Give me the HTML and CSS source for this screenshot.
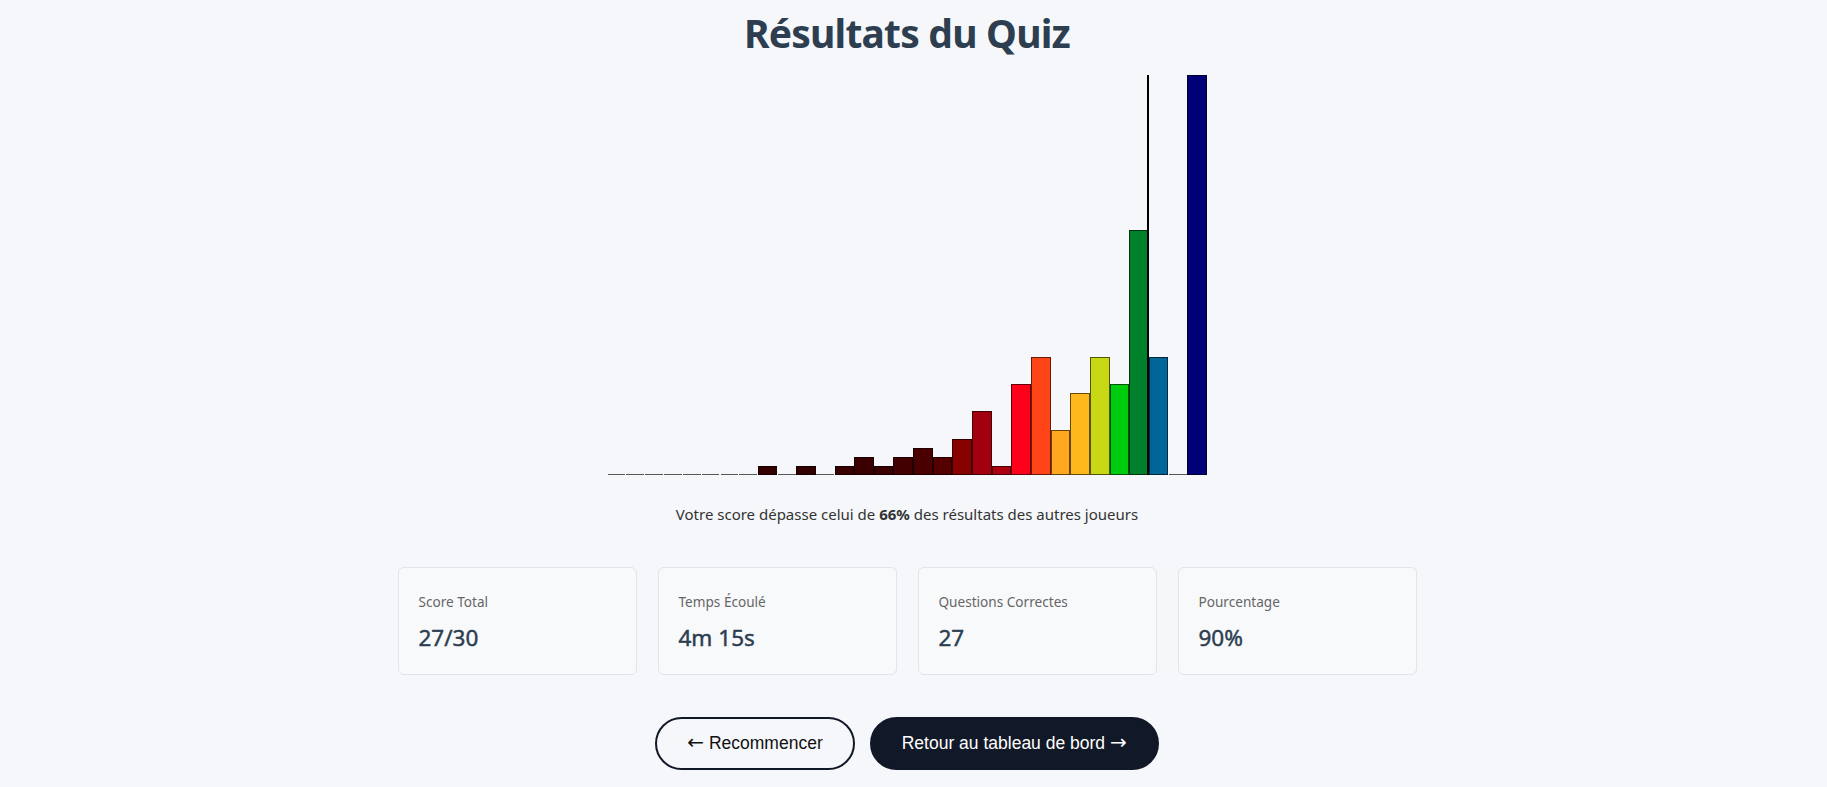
FILE: index.html
```html
<!DOCTYPE html>
<html lang="fr">
<head>
<meta charset="utf-8">
<title>Résultats du Quiz</title>
<link rel="stylesheet" href="styles.css">
</head>
<body>
<main class="page">
  <h1 class="title">Résultats du Quiz</h1>

  <div class="chart">
    <div class="bin zero"></div>
    <div class="bin zero"></div>
    <div class="bin zero"></div>
    <div class="bin zero"></div>
    <div class="bin zero"></div>
    <div class="bin zero"></div>
    <div class="bin zero"></div>
    <div class="bin zero"></div>
    <div class="bin bar" style="height:9px;background:#330000"></div>
    <div class="bin zero"></div>
    <div class="bin bar" style="height:9px;background:#330000"></div>
    <div class="bin zero"></div>
    <div class="bin bar" style="height:9px;background:#380000"></div>
    <div class="bin bar" style="height:18px;background:#3a0000"></div>
    <div class="bin bar" style="height:9px;background:#3d0000"></div>
    <div class="bin bar" style="height:18px;background:#420000"></div>
    <div class="bin bar" style="height:27px;background:#4a0000"></div>
    <div class="bin bar" style="height:18px;background:#550000"></div>
    <div class="bin bar" style="height:36px;background:#880000"></div>
    <div class="bin bar" style="height:64px;background:#a3000f"></div>
    <div class="bin bar" style="height:9px;background:#aa0010"></div>
    <div class="bin bar" style="height:91px;background:#ff001a"></div>
    <div class="bin bar" style="height:118px;background:#ff4418"></div>
    <div class="bin bar" style="height:45px;background:#ffa81f"></div>
    <div class="bin bar" style="height:82px;background:#ffb81c"></div>
    <div class="bin bar" style="height:118px;background:#c8d814"></div>
    <div class="bin bar" style="height:91px;background:#00cc0e"></div>
    <div class="bin bar" style="height:245px;background:#00802a"></div>
    <div class="bin bar" style="height:118px;background:#006699"></div>
    <div class="bin zero"></div>
    <div class="bin bar" style="height:400px;background:#000077"></div>
    <div class="marker" style="left:540px"></div>
  </div>

  <p class="summary">Votre score dépasse celui de <strong>66%</strong> des résultats des autres joueurs</p>

  <section class="stats">
    <div class="card">
      <div class="label">Score Total</div>
      <div class="value">27/30</div>
    </div>
    <div class="card">
      <div class="label">Temps Écoulé</div>
      <div class="value">4m 15s</div>
    </div>
    <div class="card">
      <div class="label">Questions Correctes</div>
      <div class="value">27</div>
    </div>
    <div class="card">
      <div class="label">Pourcentage</div>
      <div class="value">90%</div>
    </div>
  </section>

  <div class="actions">
    <button class="btn btn-outline"><span class="arrow">←</span> Recommencer</button>
    <button class="btn btn-dark">Retour au tableau de bord <span class="arrow">→</span></button>
  </div>
</main>
</body>
</html>
```

FILE: styles.css
```css
* { box-sizing: border-box; }

html, body {
  margin: 0;
  background: #f5f7fa;
}

body {
  padding-right: 13px;
  font-family: "Noto Sans", "Open Sans", sans-serif;
  color: #2c3e50;
}

.page {
  display: flex;
  flex-direction: column;
  align-items: center;
}

.title {
  margin: 0;
  padding-top: 6px;
  font-size: 39px;
  letter-spacing: -0.8px;
  font-weight: 700;
  line-height: 54px;
  color: #2c3e50;
}

.chart {
  position: relative;
  margin-top: 15px;
  width: 600px;
  height: 400px;
  display: flex;
  align-items: flex-end;
}

.bin {
  flex: 1 1 0;
  min-width: 0;
}

.bar {
  border: 1.5px solid rgba(0, 0, 0, 0.6);
}

.zero {
  height: 0;
  border-top: 1.5px solid #595959;
  margin: 0 0.6px;
}

.marker {
  position: absolute;
  top: 0;
  bottom: 0;
  width: 2px;
  background: #000;
}

.summary {
  margin: 29px 0 0;
  font-size: 15px;
  line-height: 21px;
  color: #333;
}

.summary strong {
  font-weight: 700;
}

.stats {
  margin-top: 42px;
  display: grid;
  grid-template-columns: repeat(4, 239px);
  gap: 21px;
}

.card {
  height: 108px;
  padding: 24px 20px 20px;
  background: #f8f9fb;
  border: 1px solid #e1e4e8;
  border-radius: 6px;
}

.label {
  font-size: 13.6px;
  line-height: 19px;
  color: #666;
}

.value {
  margin-top: 11px;
  font-size: 22.5px;
  font-weight: 400;
  -webkit-text-stroke: 0.45px #2c3e50;
  line-height: 32px;
  color: #2c3e50;
}

.actions {
  margin-top: 42px;
  display: flex;
  gap: 15px;
}

.btn {
  font-family: "Liberation Sans", Arial, sans-serif;
  font-size: 17.5px;
  line-height: 21px;
  padding: 14px 30px;
  border: 2px solid #111827;
  border-radius: 999px;
}

.arrow {
  font-family: "DejaVu Sans", sans-serif;
  font-size: 20px;
  line-height: 0;
}

.btn-outline {
  background: transparent;
  color: #111;
}

.btn-dark {
  background: #111827;
  color: #fff;
}
```
